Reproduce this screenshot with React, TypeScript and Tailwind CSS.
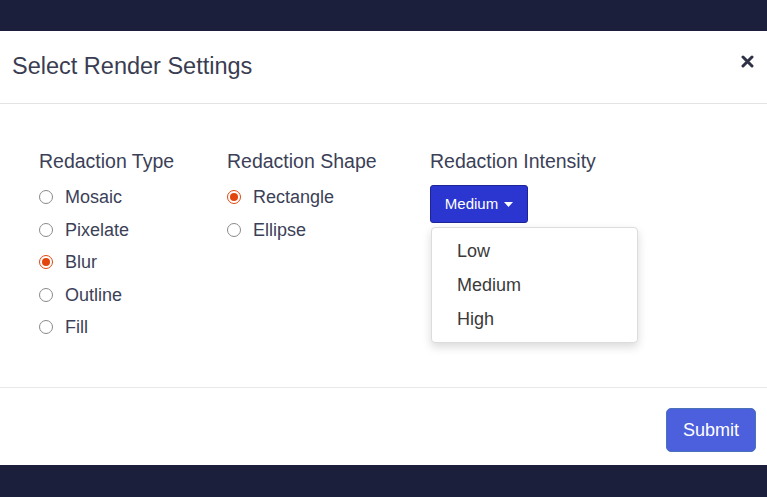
import { useState } from 'react';

const types = ['Mosaic', 'Pixelate', 'Blur', 'Outline', 'Fill'];
const shapes = ['Rectangle', 'Ellipse'];
const levels = ['Low', 'Medium', 'High'];

function Radio({ label, checked, onClick }: { label: string; checked: boolean; onClick: () => void }) {
  return (
    <button type="button" onClick={onClick} className="flex h-[32.5px] items-center gap-[12px] text-left">
      {checked ? (
        <span className="flex h-[14px] w-[14px] items-center justify-center rounded-full border-[1.5px] border-[#e2460e] bg-white">
          <span className="h-[8px] w-[8px] rounded-full bg-[#e2460e]" />
        </span>
      ) : (
        <span className="h-[14px] w-[14px] rounded-full border-[1.5px] border-[#8a8a8a] bg-white" />
      )}
      <span className="text-[18px] leading-none text-[#3c3f58]">{label}</span>
    </button>
  );
}

export default function App() {
  const [type, setType] = useState('Blur');
  const [shape, setShape] = useState('Rectangle');
  const [level, setLevel] = useState('Medium');
  const [open, setOpen] = useState(true);

  return (
    <div className="flex h-[497px] w-[767px] flex-col bg-[#1b1f3b] font-['Liberation_Sans',Arial,sans-serif]">
      <div className="h-[31px] shrink-0" />
      <div className="flex h-[434px] shrink-0 flex-col bg-white">
        {/* header */}
        <div className="flex h-[73px] items-center justify-between border-b border-[#e4e4e4] pl-[12px] pr-[13px]">
          <h1 className="pb-[1px] text-[23.5px] text-[#3a3d52]">Select Render Settings</h1>
          <button type="button" className="mb-[12px] text-[#2f3247]">
            <svg width="13" height="13" viewBox="0 0 13 13">
              <path d="M2 2 L11 11 M11 2 L2 11" stroke="currentColor" strokeWidth="3" strokeLinecap="round" />
            </svg>
          </button>
        </div>

        {/* body */}
        <div className="flex h-[284px] border-b border-[#e8e8e8] pl-[39px] pt-[45px]">
          <div className="w-[188px]">
            <div className="text-[19.5px] leading-[24px] text-[#3c3f58]">Redaction Type</div>
            <div className="mt-[8px] flex flex-col">
              {types.map(t => (
                <Radio key={t} label={t} checked={type === t} onClick={() => setType(t)} />
              ))}
            </div>
          </div>
          <div className="w-[203px]">
            <div className="text-[19.5px] leading-[24px] text-[#3c3f58]">Redaction Shape</div>
            <div className="mt-[8px] flex flex-col">
              {shapes.map(s => (
                <Radio key={s} label={s} checked={shape === s} onClick={() => setShape(s)} />
              ))}
            </div>
          </div>
          <div>
            <div className="text-[19.5px] leading-[24px] text-[#3c3f58]">Redaction Intensity</div>
            <div className="relative mt-[12px]">
              <button
                type="button"
                onClick={() => setOpen(!open)}
                className="flex h-[38px] w-[98px] items-center justify-center gap-[6px] rounded-[3px] border border-[#1c2596] bg-[#2a36cf] text-[15px] text-white"
              >
                {level}
                <svg width="9" height="5" viewBox="0 0 9 5">
                  <path d="M0 0 H9 L4.5 5 Z" fill="currentColor" />
                </svg>
              </button>
              {open && (
                <div className="absolute left-[1px] top-[42px] w-[207px] rounded-[4px] border border-[#dcdcdc] bg-white py-[6px] shadow-[0_4px_10px_rgba(0,0,0,0.15)]">
                  {levels.map(l => (
                    <button
                      type="button"
                      key={l}
                      onClick={() => { setLevel(l); setOpen(false); }}
                      className="flex h-[34px] w-full items-center pl-[25px] text-left text-[18px] text-[#3a3a3a]"
                    >
                      {l}
                    </button>
                  ))}
                </div>
              )}
            </div>
          </div>
        </div>

        {/* footer */}
        <div className="flex flex-1 items-start justify-end pr-[11px] pt-[20px]">
          <button type="button" className="h-[44px] w-[90px] rounded-[5px] border border-[#4a72b8] bg-[#4c5fdc] text-[18px] text-white">
            Submit
          </button>
        </div>
      </div>
    </div>
  );
}
